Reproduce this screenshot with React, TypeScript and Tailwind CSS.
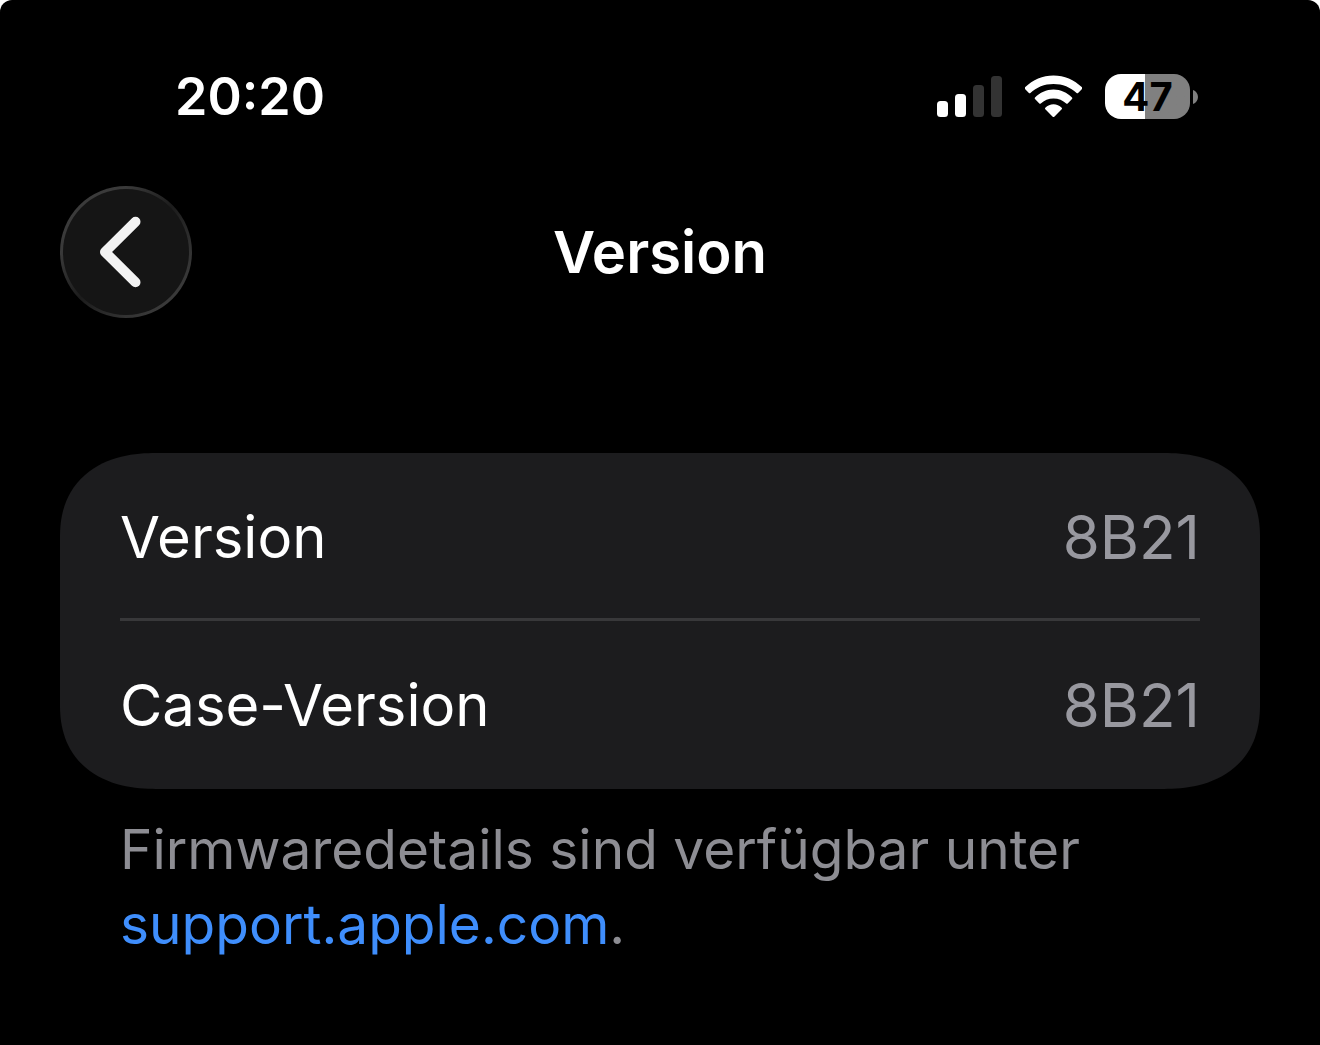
const versions = [
  { label: "Version", value: "8B21" },
  { label: "Case-Version", value: "8B21" },
];

function SignalIcon() {
  return (
    <svg viewBox="0 0 65 41" className="h-[41px] w-[65px]" aria-hidden="true">
      <rect x="0" y="25" width="11" height="16" rx="3.500" fill="#fff" />
      <rect x="18" y="18" width="11" height="23" rx="3.500" fill="#fff" />
      <rect x="36" y="9" width="11" height="32" rx="3.500" fill="#333" />
      <rect x="54" y="0" width="11" height="41" rx="3.500" fill="#333" />
    </svg>
  );
}

function WifiIcon() {
  return (
    <svg viewBox="0 0 57 43" className="h-[43px] w-[57px]" aria-hidden="true">
      <g fill="#fff">
        <path d="M0 12.300C7.800 4.900 17.700.5 28.500.5S49.200 4.900 57 12.300c.5.5.6 1.100.1 1.600l-4 4.100c-.4.4-1 .4-1.500 0C45.600 12.300 37.500 9 28.500 9S11.400 12.300 5.400 18c-.5.4-1.100.4-1.500 0L0 13.900c-.5-.5-.5-1.100 0-1.600z" />
        <path d="M10 22.500c4.900-4.800 11.400-7.900 18.500-7.900s13.600 3.100 18.500 7.900c.5.5.5 1 0 1.500l-4.300 4.400c-.5.4-1 .4-1.500 0-3.300-3.100-7.700-5-12.700-5s-9.400 1.900-12.700 5c-.5.4-1 .4-1.500 0L10 24c-.5-.5-.5-1 0-1.500z" />
        <path d="M20.300 32.700c2.200-2 5.100-3.400 8.200-3.400s6 1.400 8.200 3.400c.5.5.5 1 0 1.500l-7.400 7.500c-.5.5-1.100.5-1.600 0l-7.400-7.500c-.5-.5-.5-1 0-1.500z" />
      </g>
    </svg>
  );
}

function Battery() {
  return (
    <div className="flex items-center gap-[3px]">
      <div className="flex h-[45px] w-[85px] items-center justify-center rounded-2xl bg-linear-to-r from-white from-47% to-[#808080] to-47% text-[40px] font-bold text-black">
        47
      </div>
      <svg viewBox="0 0 5 14" className="h-3.5 w-[5px]" aria-hidden="true">
        <path d="M0 0c3 1 5 4 5 7s-2 6-5 7z" fill="#808080" />
      </svg>
    </div>
  );
}

export default function App() {
  return (
    <div className="bg-white font-['Inter',sans-serif]">
      <div className="min-h-screen rounded-t-xl bg-black px-[60px] pt-16 text-white">
        <div className="flex h-[65px] items-center justify-between pr-[62px] pl-[115px]">
          <time className="text-[52px] leading-[65px] font-semibold">20:20</time>
          <div className="flex items-center gap-[23px]">
            <SignalIcon />
            <WifiIcon />
            <Battery />
          </div>
        </div>

        <header className="mt-[57px] grid grid-cols-[132px_1fr_132px] items-center">
          <button
            type="button"
            aria-label="Zurück"
            className="size-[132px] rounded-full bg-[linear-gradient(135deg,#3c3c3c,#3a3a3a_25%,#1c1c1c_50%,#333_75%,#444)] p-[3px]"
          >
            <span className="flex size-full items-center justify-center rounded-full bg-[#151515]">
              <svg
                viewBox="0 0 126 126"
                className="size-full"
                fill="none"
                stroke="#f3f3f3"
                strokeWidth="10"
                strokeLinecap="round"
                strokeLinejoin="round"
                aria-hidden="true"
              >
                <path d="M72.500 32.700 42 63l30.500 30.300" />
              </svg>
            </span>
          </button>
          <h1 className="text-center text-[58px] font-semibold">Version</h1>
        </header>

        <main className="mt-[135px]">
          <dl className="rounded-[96px/84px] bg-[#1c1c1e] px-[60px] [corner-shape:superellipse(1.2)]">
            {versions.map((item) => (
              <div
                key={item.label}
                className="flex items-center justify-between py-12 text-[58px] leading-[72px] not-last:shadow-[inset_0_-3px_#38383a]"
              >
                <dt>{item.label}</dt>
                <dd className="text-[60px] text-[#98989f]">{item.value}</dd>
              </div>
            ))}
          </dl>
          <p className="mt-[23px] px-[60px] text-[55px] leading-[75px] text-[#8d8d93]">
            Firmwaredetails sind verfügbar unter{" "}
            <a href="https://support.apple.com" className="text-[#3f8efc]">
              support.apple.com
            </a>
            .
          </p>
        </main>
      </div>
    </div>
  );
}
